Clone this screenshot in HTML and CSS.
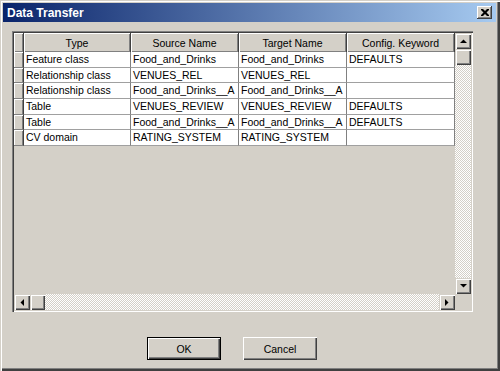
FILE: index.html
```html
<!DOCTYPE html>
<html lang="en">
<head>
<meta charset="UTF-8">
<meta name="viewport" content="width=device-width, initial-scale=1.0">
<title>Data Transfer</title>
<link rel="stylesheet" href="styles.css">
</head>
<body>
<div class="window">
  <div class="titlebar">
    <span class="title">Data Transfer</span>
    <span class="close">
      <svg width="8" height="7" viewBox="0 0 8 7"><path d="M0 0h2l2 2 2-2h2v1l-2.5 2.5 2.5 2.5v1h-2l-2-2-2 2h-2v-1l2.5-2.5-2.5-2.5z" fill="#000"/></svg>
    </span>
  </div>
  <div class="client">
    <div class="grid-box">
      <div class="grid-inner">
        <div class="table">
          <div class="row head">
            <div class="rh"></div>
            <div class="hc">Type</div>
            <div class="hc">Source Name</div>
            <div class="hc">Target Name</div>
            <div class="hc">Config. Keyword</div>
          </div>
          <div class="row">
            <div class="rh"></div>
            <div class="c">Feature class</div>
            <div class="c">Food_and_Drinks</div>
            <div class="c">Food_and_Drinks</div>
            <div class="c">DEFAULTS</div>
          </div>
          <div class="row">
            <div class="rh"></div>
            <div class="c">Relationship class</div>
            <div class="c">VENUES_REL</div>
            <div class="c">VENUES_REL</div>
            <div class="c"></div>
          </div>
          <div class="row">
            <div class="rh"></div>
            <div class="c">Relationship class</div>
            <div class="c">Food_and_Drinks__A</div>
            <div class="c">Food_and_Drinks__A</div>
            <div class="c"></div>
          </div>
          <div class="row">
            <div class="rh"></div>
            <div class="c">Table</div>
            <div class="c">VENUES_REVIEW</div>
            <div class="c">VENUES_REVIEW</div>
            <div class="c">DEFAULTS</div>
          </div>
          <div class="row">
            <div class="rh"></div>
            <div class="c">Table</div>
            <div class="c">Food_and_Drinks__A</div>
            <div class="c">Food_and_Drinks__A</div>
            <div class="c">DEFAULTS</div>
          </div>
          <div class="row">
            <div class="rh"></div>
            <div class="c">CV domain</div>
            <div class="c">RATING_SYSTEM</div>
            <div class="c">RATING_SYSTEM</div>
            <div class="c"></div>
          </div>
        </div>

        <div class="vscroll">
          <div class="sbtn"><svg width="7" height="4"><polygon points="0,4 7,4 3.5,0.5" fill="#000"/></svg></div>
          <div class="thumb"></div>
          <div class="track"></div>
          <div class="sbtn"><svg width="7" height="4"><polygon points="0,0 7,0 3.5,3.5" fill="#000"/></svg></div>
        </div>

        <div class="hscroll">
          <div class="sbtn"><svg width="4" height="7"><polygon points="4,0 4,7 0.5,3.5" fill="#000"/></svg></div>
          <div class="thumb"></div>
          <div class="track"></div>
          <div class="sbtn"><svg width="4" height="7"><polygon points="0,0 0,7 3.5,3.5" fill="#000"/></svg></div>
        </div>

        <div class="corner"></div>
      </div>
    </div>

    <div class="buttons">
      <button type="button" class="btn default">OK</button>
      <button type="button" class="btn">Cancel</button>
    </div>
  </div>
</div>
</body>
</html>
```

FILE: styles.css
```css
body {
  margin: 0;
  font-family: "Liberation Sans", Arial, sans-serif;
  font-size: 10.5px;
  color: #000;
  background: #fff;
}

.window {
  width: 500px;
  height: 371px;
  box-sizing: border-box;
  padding: 3px 4px 4px 3px;
  background: #d4d0c8;
  box-shadow: inset 1px 1px #d4d0c8, inset 2px 2px #fff,
              inset -1px -1px #404040, inset -2px -2px #404040,
              inset -3px -3px #808080;
  display: flex;
  flex-direction: column;
}

.titlebar {
  height: 19px;
  display: flex;
  align-items: center;
  justify-content: space-between;
  padding: 0 4px 0 4px;
  background: linear-gradient(to right, #0a246a, #a6caf0);
}

.title {
  color: #fff;
  font-weight: bold;
  font-size: 12px;
}

.close {
  width: 15px;
  height: 13px;
  display: flex;
  align-items: center;
  justify-content: center;
  background: #d4d0c8;
  box-shadow: inset -1px -1px #404040, inset 1px 1px #fff, inset -2px -2px #808080;
}

.client {
  display: flex;
  flex-direction: column;
  padding: 9px 0 0 9px;
}

/* sunken frame around the list */
.grid-box {
  width: 461px;
  height: 281px;
  box-sizing: border-box;
  padding: 2px;
  box-shadow: inset 1px 1px #808080, inset 2px 2px #404040,
              inset -1px -1px #fff, inset -2px -2px #d4d0c8;
}

.grid-inner {
  display: grid;
  grid-template-columns: 441px 16px;
  grid-template-rows: 261px 16px;
}

.table {
  background: #d4d0c8;
  overflow: hidden;
}

.row {
  display: grid;
  grid-template-columns: 10px 107px 108px 108px 108px;
  height: 15.7px;
}

.row.head {
  height: 19px;
}

.rh {
  box-sizing: border-box;
  background: #d4d0c8;
  border-right: 1px solid #404040;
  border-bottom: 1px solid #808080;
  box-shadow: inset 1px 1px #fff, inset -1px 0 #808080;
}

.hc {
  box-sizing: border-box;
  background: #d4d0c8;
  text-align: center;
  line-height: 18px;
  padding-top: 1px;
  border-right: 1px solid #404040;
  border-bottom: 1px solid #404040;
  box-shadow: inset 1px 1px #fff, inset -1px -1px #808080;
}

.head .rh {
  border-bottom: 1px solid #404040;
  box-shadow: inset 1px 1px #fff, inset -1px -1px #808080;
}

.c {
  box-sizing: border-box;
  background: #fff;
  padding-left: 2px;
  line-height: 15px;
  white-space: nowrap;
  overflow: hidden;
  border-right: 1px solid #808080;
  border-bottom: 1px solid #a0a0a0;
}

.sbtn {
  width: 16px;
  height: 16px;
  box-sizing: border-box;
  display: flex;
  align-items: center;
  justify-content: center;
  background: #d4d0c8;
  box-shadow: inset 1px 1px #d4d0c8, inset 2px 2px #fff,
              inset -1px -1px #404040, inset -2px -2px #808080;
}

.sbtn svg {
  display: block;
}

.thumb {
  width: 16px;
  height: 16px;
  background: #d4d0c8;
  box-shadow: inset 1px 1px #d4d0c8, inset 2px 2px #fff,
              inset -1px -1px #404040, inset -2px -2px #808080;
}

.track {
  flex: 1;
  background: repeating-conic-gradient(#fff 0 25%, #d4d0c8 0 50%) 0 0 / 2px 2px;
}

.vscroll {
  display: flex;
  flex-direction: column;
}

.hscroll {
  display: flex;
}

.hscroll .thumb {
  width: 15px;
}

.corner {
  background: #d4d0c8;
}

.buttons {
  display: flex;
  gap: 22px;
  margin-top: 25px;
  padding-left: 135px;
}

.btn {
  width: 74px;
  height: 23px;
  padding: 0;
  border: none;
  background: #d4d0c8;
  font-family: "Liberation Sans", Arial, sans-serif;
  font-size: 10.5px;
  color: #000;
  box-shadow: inset 1px 1px #fff, inset -1px -1px #404040,
              inset -2px -2px #808080;
}

.btn.default {
  box-shadow: inset 0 0 0 1px #000, inset 2px 2px #fff,
              inset -2px -2px #404040, inset -3px -3px #808080;
}
```
